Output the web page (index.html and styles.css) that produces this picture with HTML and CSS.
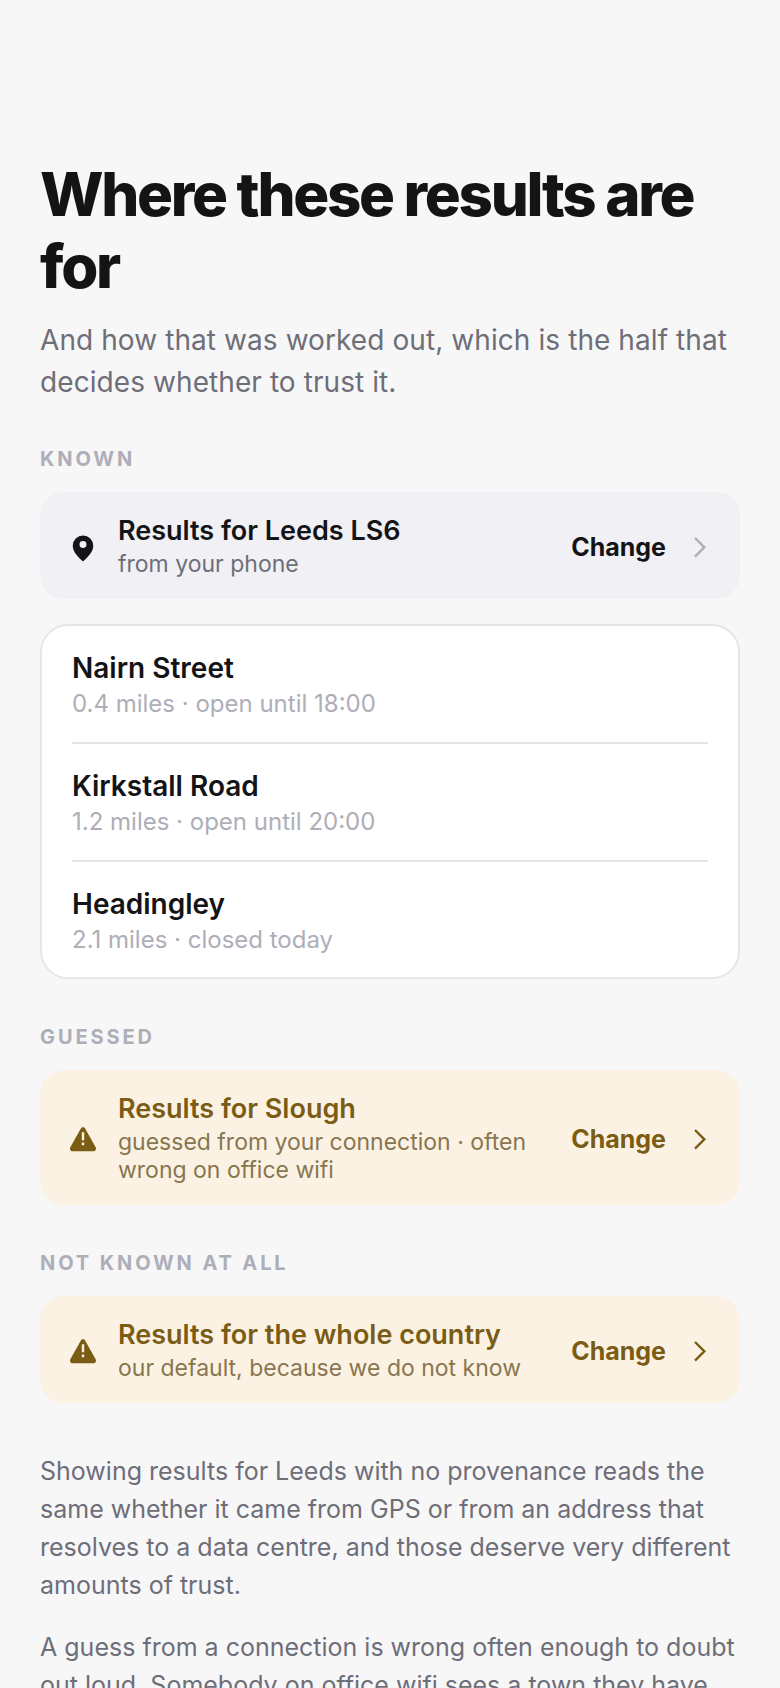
FILE: index.html
```html
<!DOCTYPE html>
<html>
<head>
	<meta charset="utf-8">
	<title>Where these results are for</title>
	<link rel="stylesheet" href="styles.css">
</head>
<body>
	<div class="page">
		<h1>Where these results are for</h1>
		<p class="lede">And how that was worked out, which is the half that decides whether to trust it.</p>

		<div class="label">KNOWN</div>
		<div class="place">
			<svg class="icon" viewBox="0 0 24 24"><path fill-rule="evenodd" d="M12 3.300a7.700 7.700 0 0 0-7.700 7.700c0 5 5.300 9.800 7.700 11.800 2.400-2 7.700-6.800 7.700-11.800A7.700 7.700 0 0 0 12 3.300zm0 4.200a2.600 2.600 0 1 1 0 5.200 2.600 2.600 0 0 1 0-5.200z"/></svg>
			<div class="place-text">
				<div class="place-title">Results for Leeds LS6</div>
				<div class="place-sub">from your phone</div>
			</div>
			<div class="change">Change</div>
			<svg class="chev chev-grey" viewBox="0 0 24 24"><path d="M9 6l7 7-7 7"/></svg>
		</div>

		<div class="list">
			<div class="item">
				<div class="item-name">Nairn Street</div>
				<div class="item-sub">0.4 miles · open until 18:00</div>
			</div>
			<div class="item">
				<div class="item-name">Kirkstall Road</div>
				<div class="item-sub">1.2 miles · open until 20:00</div>
			</div>
			<div class="item">
				<div class="item-name">Headingley</div>
				<div class="item-sub">2.1 miles · closed today</div>
			</div>
		</div>

		<div class="label label-gap">GUESSED</div>
		<div class="place warn">
			<svg class="icon" viewBox="0 0 24 24"><path fill-rule="evenodd" d="M12 4c-.7 0-1.300.4-1.700 1L2.500 19c-.8 1.400.2 3 1.700 3h15.600c1.500 0 2.500-1.600 1.700-3L13.700 5c-.4-.6-1-1-1.700-1zm-.9 3.700h1.800v6h-1.800zm0 7.600h1.800v2.200h-1.800z"/></svg>
			<div class="place-text">
				<div class="place-title">Results for Slough</div>
				<div class="place-sub">guessed from your connection · often wrong on office wifi</div>
			</div>
			<div class="change">Change</div>
			<svg class="chev" viewBox="0 0 24 24"><path d="M9 6l7 7-7 7"/></svg>
		</div>

		<div class="label label-gap">NOT KNOWN AT ALL</div>
		<div class="place warn">
			<svg class="icon" viewBox="0 0 24 24"><path fill-rule="evenodd" d="M12 4c-.7 0-1.300.4-1.700 1L2.500 19c-.8 1.400.2 3 1.700 3h15.600c1.500 0 2.500-1.600 1.700-3L13.700 5c-.4-.6-1-1-1.700-1zm-.9 3.700h1.800v6h-1.800zm0 7.600h1.800v2.200h-1.800z"/></svg>
			<div class="place-text">
				<div class="place-title">Results for the whole country</div>
				<div class="place-sub">our default, because we do not know</div>
			</div>
			<div class="change">Change</div>
			<svg class="chev" viewBox="0 0 24 24"><path d="M9 6l7 7-7 7"/></svg>
		</div>

		<p class="body first">Showing results for Leeds with no provenance reads the same whether it came from GPS or from an address that resolves to a data centre, and those deserve very different amounts of trust.</p>
		<p class="body">A guess from a connection is wrong often enough to doubt out loud. Somebody on office wifi sees a town they have</p>
	</div>
</body>
</html>
```
FILE: styles.css
```css
html, body { margin: 0; padding: 0; height: 1688px; overflow: hidden; }
body { background: #f7f7f8; color: #141416; font-family: Inter, sans-serif; }

.page { padding: 158px 40px 0; }

h1 { margin: 0; font-size: 60px; line-height: 72px; font-weight: 800; letter-spacing: -2.3px; }
.lede { margin: 17px 0 0; font-size: 28px; line-height: 42px; letter-spacing: 0.08px; color: #6e6e78; }

.label { margin-top: 41px; font-size: 20px; line-height: 30px; font-weight: 700; letter-spacing: 2.9px; color: #aeaeb8; }
.label-gap { margin-top: 43px; }

.place { display: flex; align-items: center; margin-top: 18px; padding: 23px 25px 21px 27px; background: #f0f0f5; border-radius: 24px; }
.icon { flex: none; width: 32px; height: 32px; fill: #141416; }
.place-text { flex: 1; margin: 0 24px 0 19px; }
.place-title { font-size: 27px; line-height: 32px; font-weight: 600; }
.place-sub { font-size: 23px; line-height: 28px; margin-top: 3px; color: #6e6e78; }
.change { font-size: 25px; font-weight: 700; }
.chev { flex: none; width: 32px; height: 32px; margin-left: 17px; margin-bottom: 2px; fill: none; stroke: #7a5c14; stroke-width: 1.8; }
.chev-grey { stroke: #aeaeb8; }

.warn { background: #fcf2e3; color: #7a5c14; }
.warn .icon { fill: #7a5c14; margin-bottom: 2px; }
.warn .place-sub { color: #887650; }

.list { margin-top: 25px; background: #fff; border: 2px solid #e6e6ea; border-radius: 28px; padding: 0 30px; }
.item { padding: 25px 0 22px; border-bottom: 2px solid #e6e6ea; }
.item:last-child { border-bottom: 0; padding-bottom: 21px; }
.item-name { font-size: 28px; line-height: 34px; font-weight: 600; }
.item-sub { font-size: 24px; line-height: 32px; margin-top: 3px; color: #aeaeb8; }

.body { margin: 24px 0 0; font-size: 25px; line-height: 38px; color: #6e6e78; }
.first { margin-top: 49px; }
```
